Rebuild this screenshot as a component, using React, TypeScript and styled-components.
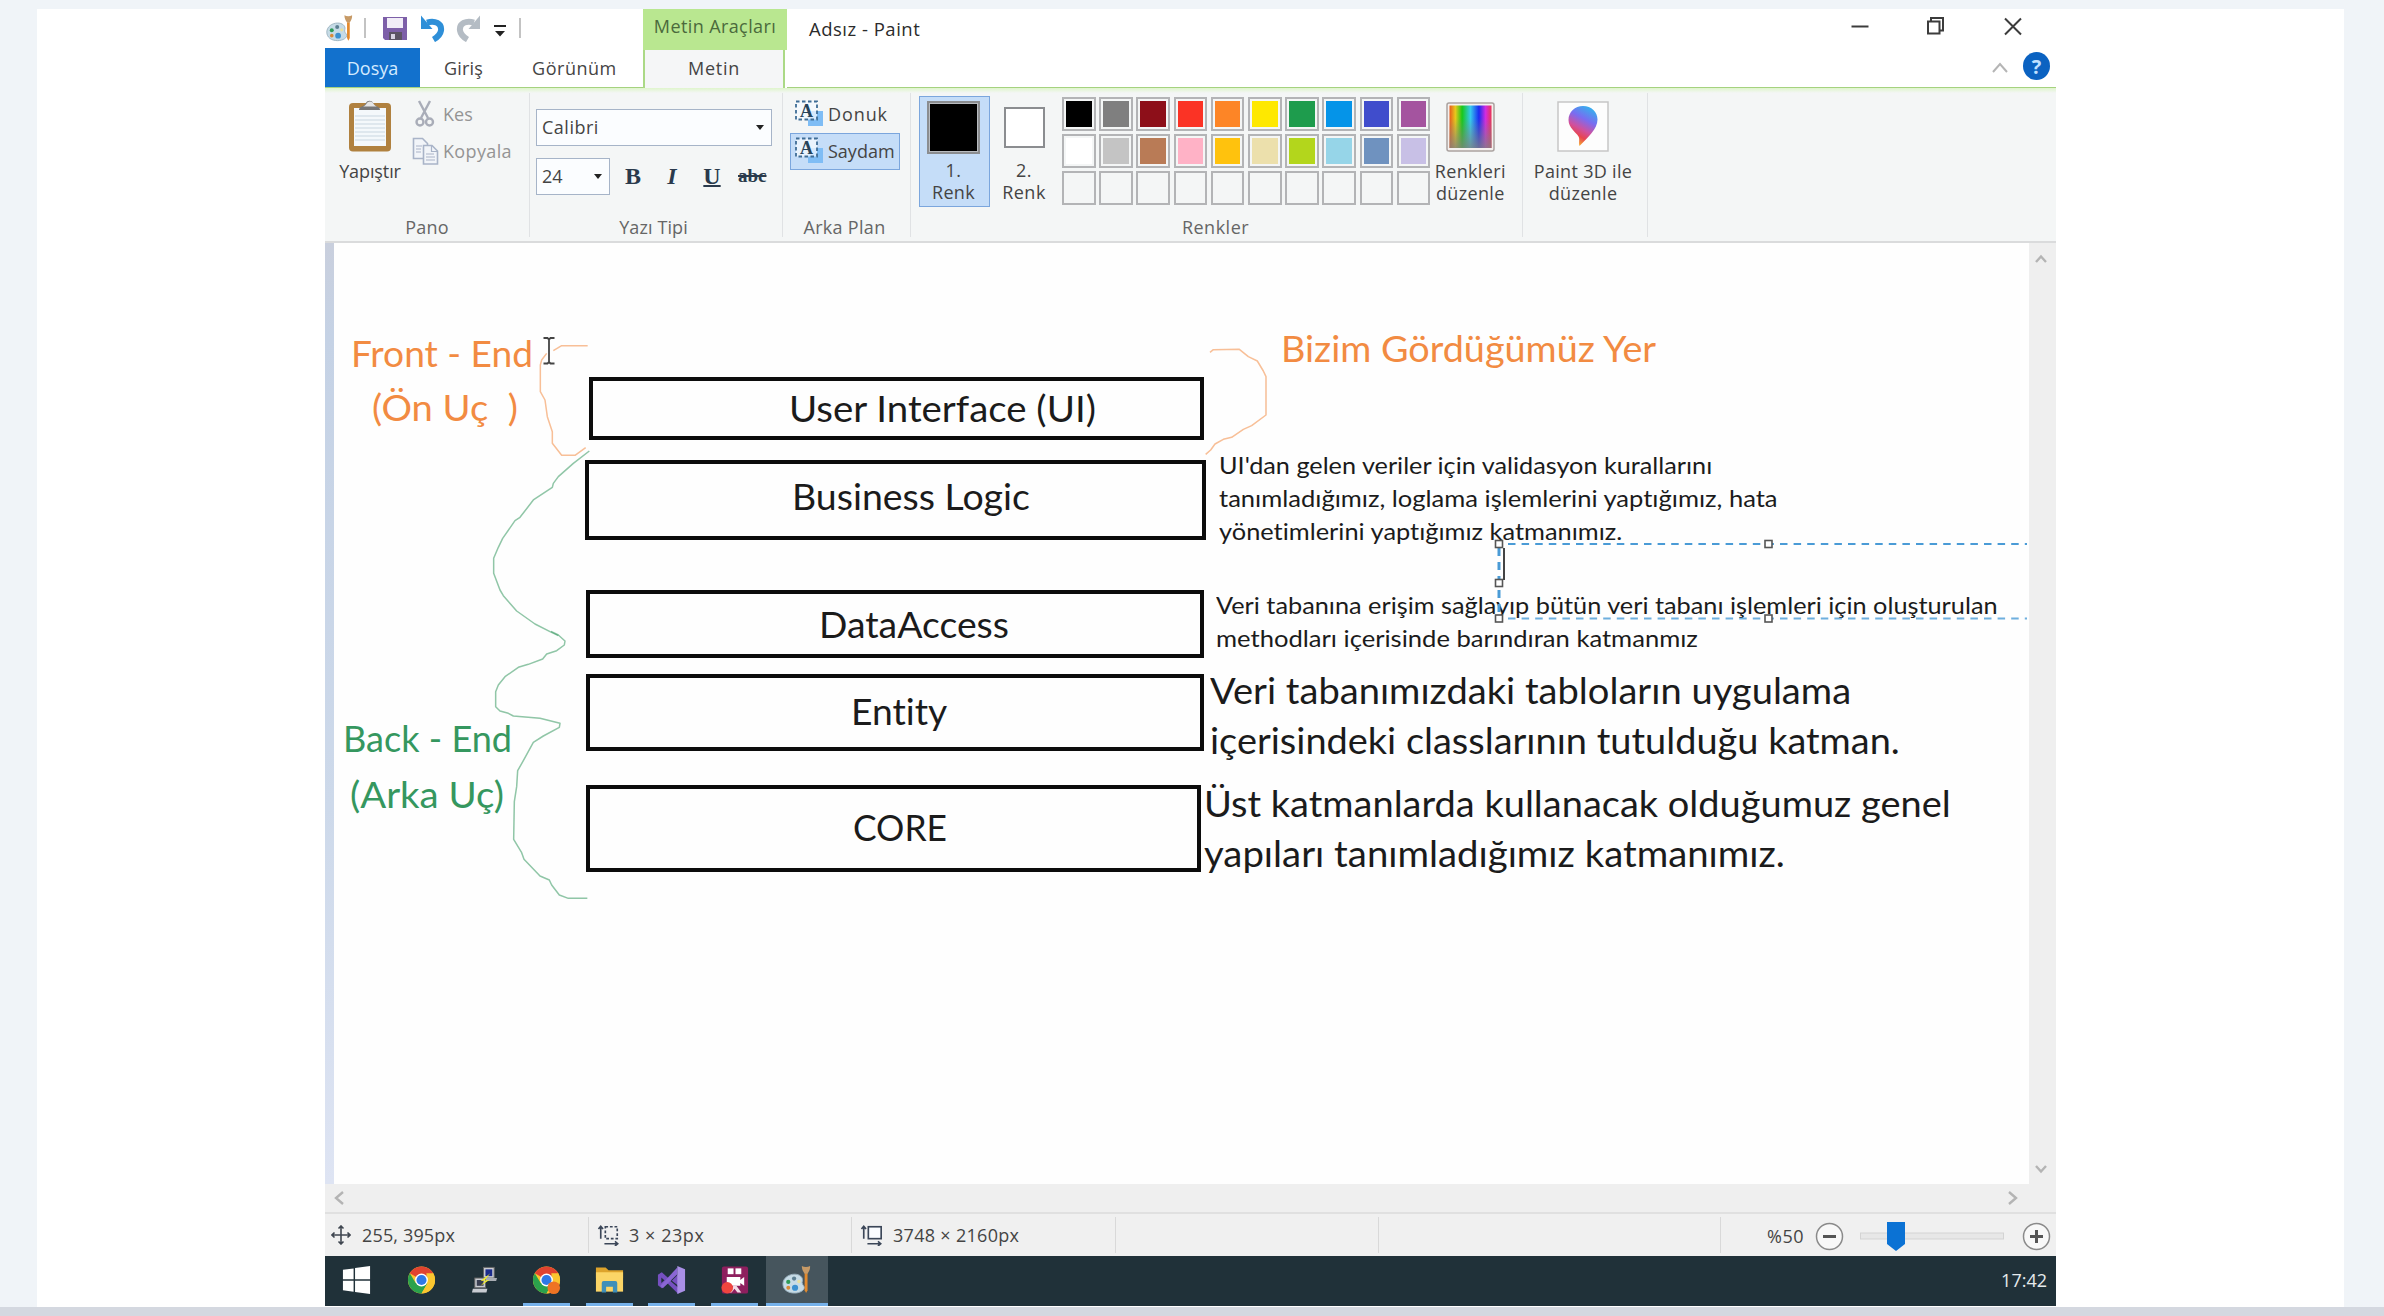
import React from "react";
import styled, { createGlobalStyle } from "styled-components";

const Global = createGlobalStyle`
  * { box-sizing: border-box; }
  body { margin: 0; background: #f0f4f8; }
`;

/* ---------- shell ---------- */

const Page = styled.div`
  display: flex;
  flex-direction: column;
  width: 2384px;
  height: 1316px;
  padding-top: 9px;
  background: #f0f4f8;
  font-family: "Open Sans", "Noto Sans", sans-serif;
  overflow: hidden;
`;
const Card = styled.div`
  display: flex;
  flex: none;
  height: 1298px;
  width: 2307px;
  margin-left: 37px;
  padding-left: 288px;
  background: #fff;
`;
const BottomEdge = styled.div`
  flex: 1;
  background: #d4d8e0;
`;
const Window = styled.div`
  display: flex;
  flex-direction: column;
  width: 1731px;
  height: 1298px;
`;

const Txt = styled.span<{ $size?: number; $track?: number; $color?: string; $lh?: number }>`
  display: block;
  flex: none;
  white-space: pre;
  font-size: ${(p) => p.$size ?? 18}px;
  letter-spacing: ${(p) => p.$track ?? 0.4}px;
  line-height: ${(p) => p.$lh ?? 22}px;
  color: ${(p) => p.$color ?? "#444444"};
`;

/* ---------- title bar ---------- */

const Header = styled.div`
  display: flex;
  height: 79px;
  background: #fff;
`;
const HeaderLeft = styled.div`
  display: flex;
  flex-direction: column;
  width: 318px;
`;
const QuickAccess = styled.div`
  display: flex;
  align-items: center;
  height: 39px;
  padding-bottom: 2px;
`;
const Bar = styled.i<{ $ml: number }>`
  width: 2px;
  height: 20px;
  margin-left: ${(p) => p.$ml}px;
  background: #c3c3c3;
`;
const QuickIcon = styled.svg<{ $w: number; $ml: number }>`
  flex: none;
  width: ${(p) => p.$w}px;
  height: 28px;
  margin-left: ${(p) => p.$ml}px;
`;
const TabRow = styled.div`
  display: flex;
  height: 40px;
  border-bottom: 1px solid #a5d27f;
`;
const FileTab = styled.div`
  display: flex;
  justify-content: center;
  width: 95px;
  height: 39px;
  padding-top: 9px;
  background: #1271cd;
`;
const Tab = styled.div<{ $pl: number }>`
  padding: 9px 0 0 ${(p) => p.$pl}px;
`;
const ContextTab = styled.div`
  display: flex;
  flex-direction: column;
  width: 144px;
  background: #b9e790;
`;
const ContextTitle = styled.div`
  display: flex;
  justify-content: center;
  height: 41px;
  padding-top: 6px;
`;
const ContextBody = styled.div`
  display: flex;
  justify-content: center;
  width: 142px;
  padding-top: 7px;
  border-left: 2px solid #abd986;
  border-right: 2px solid #abd986;
  background: #f5f6f7;
`;
const ContextRest = styled.div`
  display: flex;
  flex: 1;
  background: #fff;
`;
const HeaderRight = styled.div`
  display: flex;
  flex: 1;
  flex-direction: column;
`;
const TitleRow = styled.div`
  display: flex;
  height: 39px;
  padding-left: 22px;
`;
const Controls = styled.svg`
  width: 240px;
  height: 39px;
  margin-left: auto;
`;
const HelpRow = styled.div`
  display: flex;
  align-items: center;
  justify-content: flex-end;
  height: 40px;
  border-bottom: 1px solid #a5d27f;
`;
const Collapse = styled.svg`
  width: 18px;
  height: 14px;
  margin-right: 14px;
`;
const Help = styled.div`
  display: flex;
  align-items: center;
  justify-content: center;
  width: 27px;
  height: 28px;
  margin: 0 6px 3px 0;
  border-radius: 50%;
  background: #0b62c1;
  color: #bfe0ff;
  font-size: 20px;
  font-weight: 700;
`;

/* ---------- ribbon ---------- */

const Ribbon = styled.div`
  display: flex;
  height: 155px;
  border-bottom: 2px solid #dadbdc;
  background: linear-gradient(#dff5cc 0, #f4f6f6 5px);
`;
const Group = styled.div<{ $w: number }>`
  display: flex;
  flex-direction: column;
  flex: none;
  width: ${(p) => p.$w}px;
  margin: 5px 0 4px;
  border-right: 1px solid #e0e2e4;
`;
const GroupBody = styled.div<{ $pl?: number }>`
  display: flex;
  flex: 1;
  padding-left: ${(p) => p.$pl ?? 0}px;
`;
const GroupLabel = styled.div<{ $inset?: number }>`
  display: flex;
  justify-content: center;
  height: 20px;
  padding-right: ${(p) => p.$inset ?? 0}px;
`;
const BigButton = styled.div<{ $w: number; $pt: number; $gap: number; $ml?: number }>`
  display: flex;
  flex-direction: column;
  flex: none;
  align-items: center;
  width: ${(p) => p.$w}px;
  margin-left: ${(p) => p.$ml ?? 0}px;
  padding-top: ${(p) => p.$pt}px;
  gap: ${(p) => p.$gap}px;
`;
const BigLabel = styled.div`
  display: flex;
  flex-direction: column;
  align-items: center;
`;
const Stack = styled.div<{ $pt: number }>`
  display: flex;
  flex-direction: column;
  padding-top: ${(p) => p.$pt}px;
`;
const SmallButton = styled.div<{ $on?: boolean; $w?: number }>`
  display: flex;
  align-items: center;
  gap: 4px;
  width: ${(p) => (p.$w ? p.$w + "px" : "auto")};
  height: 37px;
  padding: 0 0 2px 3px;
  border: 1px solid ${(p) => (p.$on ? "#7ba6dd" : "transparent")};
  background: ${(p) => (p.$on ? "#c5ddf8" : "transparent")};
`;
const Select = styled.div<{ $w: number }>`
  display: flex;
  align-items: center;
  justify-content: space-between;
  width: ${(p) => p.$w}px;
  height: 37px;
  padding: 0 7px 0 5px;
  border: 1px solid #a6b4c8;
  background: #fbfdff;
`;
const Arrow = styled.i`
  border: 4.5px solid transparent;
  border-top: 5px solid #222;
  border-bottom: 0;
`;
const FontRow = styled.div`
  display: flex;
  align-items: center;
  margin-top: 12px;
`;
const Glyph = styled.span<{ $w: number; $ml: number; $size?: number; $italic?: boolean; $line?: string }>`
  width: ${(p) => p.$w}px;
  margin-left: ${(p) => p.$ml}px;
  font-family: "Liberation Serif", "DejaVu Serif", serif;
  font-size: ${(p) => p.$size ?? 24}px;
  font-weight: 700;
  font-style: ${(p) => (p.$italic ? "italic" : "normal")};
  text-decoration: ${(p) => p.$line ?? "none"};
  text-decoration-thickness: 2px;
  text-align: center;
  white-space: nowrap;
  line-height: 30px;
  color: #2a3a4c;
`;
const ColorSlot = styled.div<{ $on?: boolean; $w: number; $ml: number; $pt: number }>`
  display: flex;
  flex-direction: column;
  align-items: center;
  width: ${(p) => p.$w}px;
  height: 111px;
  margin: 3px 0 0 ${(p) => p.$ml}px;
  padding: ${(p) => p.$pt}px 2px 0 0;
  border: 1px solid ${(p) => (p.$on ? "#7ba6dd" : "transparent")};
  background: ${(p) => (p.$on ? "#c5ddf8" : "transparent")};
`;
const Swatch = styled.i<{ $size: number; $c: string; $ring: string; $mb: number }>`
  width: ${(p) => p.$size}px;
  height: ${(p) => p.$size}px;
  margin-bottom: ${(p) => p.$mb}px;
  border: 2px solid #8b8d90;
  background: ${(p) => p.$c};
  box-shadow: inset 0 0 0 1px ${(p) => p.$ring};
`;
const Palette = styled.div`
  display: grid;
  grid-template-columns: repeat(10, 33.6px);
  grid-template-rows: repeat(3, 33.6px);
  gap: 3.6px;
  margin: 4px 0 0 3px;
`;
const Cell = styled.i<{ $c?: string }>`
  border: 2px solid #b3b4b6;
  padding: 2px;
  background: ${(p) => p.$c ?? "transparent"};
  background-clip: content-box;
`;

/* ---------- work area ---------- */

const WorkArea = styled.div`
  display: flex;
  height: 941px;
`;
const Gutter = styled.div`
  width: 9px;
  background: linear-gradient(#c9cfdd, #c5d2e5 10%, #cdd9ea 60%, #dee4f3);
`;
const Sheet = styled.div`
  position: relative;
  width: 1695px;
  background: #fefefe;
  overflow: hidden;
`;
const VScroll = styled.div`
  display: flex;
  flex: 1;
  flex-direction: column;
  align-items: center;
  justify-content: space-between;
  padding: 8px 3px 7px 0;
  background: #efefef;
`;
const HScroll = styled.div`
  display: flex;
  align-items: center;
  justify-content: space-between;
  height: 28px;
  padding: 0 35px 0 6px;
  background: #efefef;
`;
const Chevron = styled.svg`
  width: 16px;
  height: 16px;
  fill: none;
  stroke: #b4b4b4;
  stroke-width: 2.4;
`;
const Ink = styled.svg`
  position: absolute;
  inset: 0;
  width: 1695px;
  height: 941px;
  fill: none;
`;
const Box = styled.div<{ $x: number; $y: number; $w: number; $h: number; $pl: number; $lift?: number }>`
  position: absolute;
  left: ${(p) => p.$x}px;
  top: ${(p) => p.$y}px;
  display: flex;
  align-items: center;
  width: ${(p) => p.$w}px;
  height: ${(p) => p.$h}px;
  padding: 0 0 ${(p) => p.$lift ?? 0}px ${(p) => p.$pl}px;
  border: 4px solid #0c0c0c;
`;
const Note = styled.div<{ $x: number; $y: number }>`
  position: absolute;
  left: ${(p) => p.$x}px;
  top: ${(p) => p.$y}px;
`;
const Line = styled.span<{ $stretch: number; $size?: number; $lh?: number; $c?: string; $in?: number }>`
  display: block;
  margin-left: ${(p) => p.$in ?? 0}px;
  font-family: "Lato", "Noto Sans", sans-serif;
  font-size: ${(p) => p.$size ?? 36}px;
  font-variant-ligatures: none;
  line-height: ${(p) => p.$lh ?? 50}px;
  white-space: pre;
  color: ${(p) => p.$c ?? "#1b1b1b"};
  transform: scaleX(${(p) => p.$stretch});
  transform-origin: left;
`;

/* ---------- status bar and taskbar ---------- */

const Status = styled.div`
  display: flex;
  height: 44px;
  padding-top: 3px;
  border-top: 2px solid #e0e0e0;
  background: #f0f0f0;
`;
const Field = styled.div<{ $w: number; $pl: number; $gap?: number }>`
  display: flex;
  align-items: center;
  flex: none;
  gap: ${(p) => p.$gap ?? 0}px;
  width: ${(p) => p.$w}px;
  height: 36px;
  padding-left: ${(p) => p.$pl}px;
  border-right: 1px solid #d9d9d9;
`;
const Zoom = styled.div`
  display: flex;
  align-items: center;
  flex: 1;
  padding: 0 6px 1px 46px;
`;
const Round = styled.svg<{ $ml?: number }>`
  flex: none;
  width: 29px;
  height: 29px;
  margin-left: ${(p) => p.$ml ?? 0}px;
`;
const Slider = styled.svg`
  flex: none;
  width: 145px;
  height: 32px;
  margin: 0 17px 0 16px;
`;
const Taskbar = styled.div`
  display: flex;
  height: 50px;
  background: #203139;
`;
const Task = styled.div<{ $active?: boolean; $start?: boolean }>`
  display: flex;
  flex-direction: column;
  align-items: center;
  width: 62.5px;
  margin-right: ${(p) => (p.$start ? 3 : 0)}px;
  padding-top: 8px;
  background: ${(p) => (p.$active ? "#46555d" : "transparent")};
`;
const TaskIcon = styled.svg`
  width: 31px;
  height: 32px;
`;
const Running = styled.i<{ $full?: boolean }>`
  width: ${(p) => (p.$full ? "100%" : "47px")};
  height: 3px;
  margin-top: auto;
  background: #76b1ea;
`;
const Clock = styled.div`
  margin: 0 9px 0 auto;
  padding-top: 13px;
`;

/* ---------- icons ---------- */

const PaletteArt = () => (
  <>
    <path d="M1 20c0-6 6-10 12-10 5 0 9 3 8 7-1 3 1 4 2 6 1 3-4 6.500-10 6.500C6 29.500 1 26 1 20z" fill="#c6dbe6" stroke="#9bb2bf" strokeWidth="1" />
    <circle cx="6.500" cy="18" r="2.200" fill="#2f9b57" />
    <circle cx="12.500" cy="14.500" r="2.200" fill="#5d7f92" />
    <circle cx="6.500" cy="24" r="2" fill="#d98b38" />
    <circle cx="13.500" cy="24" r="3.200" fill="#3b91d0" />
    <circle cx="17.500" cy="17.500" r="1.800" fill="#e8e0a0" />
    <path d="M23.400 9h3v17.500l-1.500 3-1.500-3z" fill="#e48a2c" />
    <path d="M20.500 1.500c2.500 1.500 6 1.500 8.500 0 .2 3-.8 5.500-2.600 8h-3C21.500 7 20.500 4.500 20.500 1.500z" fill="#c79a66" />
  </>
);
const ChromeArt = () => (
  <>
    <circle cx="16" cy="16" r="14" fill="#fbc62f" />
    <path d="M16 16 3.900 9A14 14 0 0 1 28.100 9z" fill="#e1432f" />
    <path d="M3.900 9A14 14 0 0 0 16 30l6-10.500L10 19z" fill="#2ba24c" />
    <path d="M28.100 9A14 14 0 0 1 16 30l6.100-10.500L21 9z" fill="#fbc62f" />
    <circle cx="16" cy="16" r="6.600" fill="#fff" />
    <circle cx="16" cy="16" r="5.200" fill="#2f78e6" />
  </>
);
const TextBlockIcon = () => (
  <svg width="30" height="28" viewBox="0 0 30 28">
    <rect x="14" y="11" width="15" height="15" fill="#7fbdf5" />
    <rect x="2" y="1.500" width="21" height="18" fill="#f6faff" fillOpacity=".75" stroke="#3f6d96" strokeWidth="1.800" strokeDasharray="3.500 2.500" />
    <text x="12.500" y="17" textAnchor="middle" fontFamily="Liberation Serif, serif" fontSize="18" fontWeight="700" fill="#27435a">A</text>
  </svg>
);

const row1 = ["#000000", "#7f7f7f", "#8d0f19", "#fb3325", "#fd8526", "#fee800", "#1e9c4d", "#0594e8", "#404dcc", "#a4549f"];
const row2 = ["#ffffff", "#c4c4c4", "#b97b56", "#ffb2c6", "#ffc20d", "#ece0ac", "#b3d61c", "#96d5e8", "#6f92bf", "#c8c0e6"];

const ORANGE = "#f28b42";
const GREEN = "#35975f";
const handles: [number, number][] = [[1499, 544], [1499, 583], [1499, 618.5], [1768.5, 544], [1768.5, 618.5]];

export default function App() {
  return (
    <Page>
      <Global />
      <Card>
        <Window>
          <Header>
            <HeaderLeft>
              <QuickAccess>
                <QuickIcon $w={28} $ml={0} viewBox="0 0 29 31"><PaletteArt /></QuickIcon>
                <Bar $ml={11} />
                <QuickIcon $w={26} $ml={16} viewBox="0 0 26 28">
                  <path d="M1 3h24v23H3l-2-2z" fill="#7d5fa8" />
                  <rect x="5" y="4" width="16" height="10" fill="#f1edf7" />
                  <rect x="7" y="18" width="13" height="8" fill="#5c5364" />
                  <rect x="9" y="20" width="4" height="5" fill="#d8d2e2" />
                </QuickIcon>
                <QuickIcon $w={25} $ml={12} viewBox="0 0 25 28">
                  <path d="M7 8.500c8-2.500 15 1 14 8-.6 4-4 7-7.500 9" fill="none" stroke="#2e8fd8" strokeWidth="6" />
                  <path d="M1 1.500v13.500h11.500z" fill="#2e8fd8" />
                </QuickIcon>
                <QuickIcon $w={25} $ml={11} viewBox="0 0 25 28">
                  <path d="M18 8.500C10 6 3 9.500 4 16.500c.6 4 4 7 7.500 9" fill="none" stroke="#b4bcc4" strokeWidth="6" />
                  <path d="M24 1.500v13.500H12.500z" fill="#b4bcc4" />
                </QuickIcon>
                <QuickIcon $w={14} $ml={12} viewBox="0 0 14 28">
                  <path d="M1 11h12v2H1zM2 17h10l-5 5.500z" fill="#222" />
                </QuickIcon>
                <Bar $ml={12} />
              </QuickAccess>
              <TabRow>
                <FileTab><Txt $track={0} $color="#d3ebff">Dosya</Txt></FileTab>
                <Tab $pl={24}><Txt $track={0.2}>Giriş</Txt></Tab>
                <Tab $pl={49}><Txt $track={0.5}>Görünüm</Txt></Tab>
              </TabRow>
            </HeaderLeft>
            <ContextTab>
              <ContextTitle><Txt $track={0.4} $color="#4b6a3c">Metin Araçları</Txt></ContextTitle>
              <ContextRest>
                <ContextBody><Txt $track={0.7}>Metin</Txt></ContextBody>
              </ContextRest>
            </ContextTab>
            <HeaderRight>
              <TitleRow>
                <Txt $size={18.5} $track={0.5} $lh={39} $color="#2b2b2b">Adsız - Paint</Txt>
                <Controls viewBox="1816 9 240 39" fill="none" stroke="#3c3c3c" strokeWidth="2">
                  <path d="M1851.500 26.500h17" />
                  <path d="M1928 21.500h11.500v12H1928z" />
                  <path d="M1931 21v-3h12v12.500h-3" />
                  <path d="M2005 18.500l16 16M2021 18.500l-16 16" />
                </Controls>
              </TitleRow>
              <HelpRow>
                <Collapse viewBox="0 0 18 14" fill="none" stroke="#b5b5b5" strokeWidth="2"><path d="M2 11 9 3l7 8" /></Collapse>
                <Help>?</Help>
              </HelpRow>
            </HeaderRight>
          </Header>

          <Ribbon>
            <Group $w={205}>
              <GroupBody $pl={7}>
                <BigButton $w={76} $pt={7} $gap={8}>
                  <svg width="44" height="52" viewBox="0 0 44 52">
                    <rect x="1" y="3" width="42" height="48.500" rx="4" fill="#b0813f" />
                    <path d="M6 8h32v38H6z" fill="#f4f8fb" />
                    <path d="M7 16h30M7 20h30M7 24h30M7 28h30M7 32h30M7 36h30M7 40h30" stroke="#c9d6e0" strokeWidth="1" />
                    <path d="M11 10c0-4 5-3 7-7 1-3 6-3 7 0 2 4 7 3 7 7z" fill="#777" />
                    <path d="M15 6.500c4-1 3-5 7-5s3 4 7 5z" fill="#e6e6e6" />
                  </svg>
                  <Txt $track={-0.1}>Yapıştır</Txt>
                </BigButton>
                <Stack $pt={3}>
                  <SmallButton>
                    <svg width="27" height="28" viewBox="0 0 27 28" fill="none" stroke="#a9adb8" strokeWidth="2.400">
                      <path d="M7 1l9 17M18 1 9 18" />
                      <circle cx="8" cy="22" r="3.500" />
                      <circle cx="17.500" cy="22" r="3.500" />
                    </svg>
                    <Txt $track={0} $color="#949494">Kes</Txt>
                  </SmallButton>
                  <SmallButton>
                    <svg width="27" height="28" viewBox="0 0 27 28" fill="#f2f5f9" stroke="#a9b4c8" strokeWidth="1.600">
                      <path d="M1.500 1.500h9l5 5v15h-14z" />
                      <path d="M11.500 8.500h8.500l5.500 5.500v13h-14z" />
                      <path d="M19.500 8.500v6h6M14 17h8M14 20h9M14 23h9M4 9h6M4 12h5M4 15h5" fill="none" strokeWidth="1.200" />
                    </svg>
                    <Txt $track={0.35} $color="#949494">Kopyala</Txt>
                  </SmallButton>
                </Stack>
              </GroupBody>
              <GroupLabel><Txt $track={0.2} $lh={20} $color="#666">Pano</Txt></GroupLabel>
            </Group>

            <Group $w={253}>
              <GroupBody $pl={6}>
                <Stack $pt={15.5}>
                  <Select $w={236}><Txt $track={0.5}>Calibri</Txt><Arrow /></Select>
                  <FontRow>
                    <Select $w={74}><Txt $track={0}>24</Txt><Arrow /></Select>
                    <Glyph $w={20} $ml={13}>B</Glyph>
                    <Glyph $w={18} $ml={20} $italic>I</Glyph>
                    <Glyph $w={18} $ml={22} $line="underline">U</Glyph>
                    <Glyph $w={28} $ml={17} $size={19} $line="line-through">abc</Glyph>
                  </FontRow>
                </Stack>
              </GroupBody>
              <GroupLabel $inset={5}><Txt $track={0.1} $lh={20} $color="#666">Yazı Tipi</Txt></GroupLabel>
            </Group>

            <Group $w={128}>
              <GroupBody $pl={7}>
                <Stack $pt={3}>
                  <SmallButton $w={110}><TextBlockIcon /><Txt $track={0.9}>Donuk</Txt></SmallButton>
                  <SmallButton $on $w={110}><TextBlockIcon /><Txt $track={0}>Saydam</Txt></SmallButton>
                </Stack>
              </GroupBody>
              <GroupLabel $inset={4}><Txt $track={0.3} $lh={20} $color="#666">Arka Plan</Txt></GroupLabel>
            </Group>

            <Group $w={612}>
              <GroupBody $pl={8}>
                <ColorSlot $on $w={71} $ml={0} $pt={4}>
                  <Swatch $size={53} $c="#000000" $ring="#b9bcc0" $mb={5} />
                  <Txt>1.</Txt>
                  <Txt $track={0.3}>Renk</Txt>
                </ColorSlot>
                <ColorSlot $w={68} $ml={1} $pt={10}>
                  <Swatch $size={41} $c="#ffffff" $ring="#ffffff" $mb={11} />
                  <Txt>2.</Txt>
                  <Txt $track={0.5}>Renk</Txt>
                </ColorSlot>
                <Palette>
                  {row1.map((c) => <Cell key={c} $c={c} />)}
                  {row2.map((c) => <Cell key={c} $c={c} />)}
                  {row1.map((c) => <Cell key={"empty" + c} />)}
                </Palette>
                <BigButton $w={84} $ml={-2} $pt={9} $gap={8}>
                  <svg width="49" height="50" viewBox="0 0 49 50">
                    <defs>
                      <linearGradient id="hue">
                        <stop offset="0" stopColor="#e85a1c" /><stop offset=".14" stopColor="#e8c81c" />
                        <stop offset=".3" stopColor="#18c818" /><stop offset=".5" stopColor="#35c9ee" />
                        <stop offset=".7" stopColor="#1a2cf0" /><stop offset=".86" stopColor="#d32ce0" />
                        <stop offset="1" stopColor="#ea3452" />
                      </linearGradient>
                      <linearGradient id="fade" x2="0" y2="1">
                        <stop offset=".3" stopColor="#808080" stopOpacity="0" /><stop offset="1" stopColor="#808080" stopOpacity=".8" />
                      </linearGradient>
                    </defs>
                    <rect x="1" y="1" width="47" height="48" rx="2" fill="#f4f0ee" stroke="#aaa2a0" strokeWidth="1.500" />
                    <rect x="3.500" y="3.500" width="42" height="42.500" fill="url(#hue)" />
                    <rect x="3.500" y="3.500" width="42" height="42.500" fill="url(#fade)" />
                  </svg>
                  <BigLabel><Txt $track={0.35}>Renkleri</Txt><Txt $track={0.35}>düzenle</Txt></BigLabel>
                </BigButton>
              </GroupBody>
              <GroupLabel $inset={2}><Txt $track={0.5} $lh={20} $color="#666">Renkler</Txt></GroupLabel>
            </Group>

            <Group $w={125}>
              <GroupBody>
                <BigButton $w={120} $pt={8} $gap={8}>
                  <svg width="52" height="51" viewBox="0 0 52 51">
                    <defs>
                      <linearGradient id="pin" x1=".75" y1="0" x2=".35" y2="1">
                        <stop offset="0" stopColor="#2fb6ee" /><stop offset=".35" stopColor="#7a6cf0" />
                        <stop offset=".6" stopColor="#d0509e" /><stop offset=".78" stopColor="#e8454f" />
                        <stop offset="1" stopColor="#f7b62c" />
                      </linearGradient>
                    </defs>
                    <rect x="1" y="1" width="50" height="49" fill="#fdfdfd" stroke="#c6c6c6" strokeWidth="1.500" />
                    <path d="M26 5c8.500 0 14.500 6 14.500 13.500C40.500 28 31 36 22.500 45c-1-3 .5-7-1-9.500C19 31 11.500 27 11.500 19 11.500 11 18 5 26 5z" fill="url(#pin)" />
                  </svg>
                  <BigLabel><Txt $track={0.3}>Paint 3D ile</Txt><Txt $track={0.35}>düzenle</Txt></BigLabel>
                </BigButton>
              </GroupBody>
            </Group>
          </Ribbon>

          <WorkArea>
            <Gutter />
            <Sheet>
              <Ink viewBox="334 243 1695 941">
                <g stroke={ORANGE} strokeOpacity=".55" strokeWidth="4.500" strokeLinejoin="round">
                  <path transform="translate(320 310) scale(.33333)" d="M803 107H725L700 122M680 130 665 150 661 165V245L675 270 682 320 697 365V400L725 436H765L797 413" />
                  <path transform="translate(1180 310) scale(.33333)" d="M90 127 100 119 178 118 205 140 232 153 250 183 258 200V315L215 347 190 358 155 382 130 388 105 402 92 420 77 433" />
                </g>
                <g stroke={GREEN} strokeOpacity=".55" strokeWidth="4.500" strokeLinejoin="round">
                  <path transform="translate(320 310) scale(.33333)" d="M808 423 760 460 715 500 700 520 697 532 640 570 600 622 585 632 548 685 535 712 521 745V790L540 840 550 857 590 903 645 942 690 965 715 977" />
                  <path transform="translate(320 630) scale(.33333)" d="M693 4 715 15 735 33 733 45 710 62 680 72 668 87 625 103 595 112 555 140 535 165 527 185V230L540 243 565 250 580 258 660 265 720 280 718 292 670 318 640 337 610 392 593 422 590 470 583 515 581 628 605 668 612 688 660 738 688 750 695 765 718 795 745 805H802" />
                </g>
              </Ink>

              <Note $x={16.5} $y={83}>
                <Line $c={ORANGE} $stretch={1.03} $lh={54}>Front - End</Line>
                <Line $c={ORANGE} $stretch={1.06} $lh={54} $in={21}>(Ön Uç  )</Line>
              </Note>
              <Note $x={8.5} $y={466.5}>
                <Line $c={GREEN} $stretch={1.002} $lh={56}>Back - End</Line>
                <Line $c={GREEN} $stretch={1.066} $lh={56} $in={7}>(Arka Uç)</Line>
              </Note>
              <Note $x={947} $y={80}><Line $c={ORANGE} $stretch={1.049}>Bizim Gördüğümüz Yer</Line></Note>

              <Box $x={255.3} $y={134.3} $w={615} $h={63} $pl={196} $lift={2}><Line $stretch={1.067}>User Interface (UI)</Line></Box>
              <Box $x={250.5} $y={217} $w={621.5} $h={80} $pl={203} $lift={8}><Line $stretch={1.04}>Business Logic</Line></Box>
              <Box $x={252} $y={347} $w={618} $h={68} $pl={229}><Line $stretch={1.037}>DataAccess</Line></Box>
              <Box $x={252} $y={431} $w={617.5} $h={77} $pl={260.5} $lift={4}><Line $stretch={1.034}>Entity</Line></Box>
              <Box $x={252} $y={542} $w={614.5} $h={87} $pl={262.5} $lift={4}><Line $stretch={0.982}>CORE</Line></Box>

              <Note $x={884.5} $y={205}>
                <Line $size={24} $lh={33} $stretch={1.052}>UI'dan gelen veriler için validasyon kurallarını</Line>
                <Line $size={24} $lh={33} $stretch={1.064}>tanımladığımız, loglama işlemlerini yaptığımız, hata</Line>
                <Line $size={24} $lh={33} $stretch={1.058}>yönetimlerini yaptığımız katmanımız.</Line>
              </Note>
              <Note $x={882} $y={345}>
                <Line $size={24} $lh={33.4} $stretch={1.054}>Veri tabanına erişim sağlayıp bütün veri tabanı işlemleri için oluşturulan</Line>
                <Line $size={24} $lh={33.4} $stretch={1.066}>methodları içerisinde barındıran katmanmız</Line>
              </Note>
              <Note $x={876} $y={422}>
                <Line $stretch={1.058}>Veri tabanımızdaki tabloların uygulama</Line>
                <Line $stretch={1.054}>içerisindeki classlarının tutulduğu katman.</Line>
              </Note>
              <Note $x={870} $y={535}>
                <Line $stretch={1.055}>Üst katmanlarda kullanacak olduğumuz genel</Line>
                <Line $stretch={1.064}>yapıları tanımladığımız katmanımız.</Line>
              </Note>

              <Ink viewBox="334 243 1695 941">
                <g stroke="#4a9bd6" strokeWidth="2.200" strokeDasharray="7.500 6.100">
                  <path d="M1508 544H2027" />
                  <path d="M1508 618.500H2027" strokeOpacity=".8" />
                  <path d="M1499 548V615" strokeDasharray="8 6" strokeWidth="3" />
                </g>
                <path d="M1504 548V580" stroke="#444" strokeWidth="2" />
                <path d="M543.500 338h4l1.500 1.500 1.500-1.500h4M549 339v23M543.500 363.500h4l1.500-1.500 1.500 1.500h4" stroke="#444" strokeWidth="1.800" />
                {handles.map(([x, y]) => (
                  <rect key={`${x}-${y}`} x={x - 3.5} y={y - 3.5} width="7" height="7" fill="#fff" stroke="#555" strokeWidth="1.600" />
                ))}
              </Ink>
            </Sheet>
            <VScroll>
              <Chevron viewBox="0 0 16 16"><path d="M3 11 8 5.500 13 11" /></Chevron>
              <Chevron viewBox="0 0 16 16"><path d="M3 5 8 10.500 13 5" /></Chevron>
            </VScroll>
          </WorkArea>
          <HScroll>
            <Chevron viewBox="0 0 16 16"><path d="M12 2 5 8l7 6" /></Chevron>
            <Chevron viewBox="0 0 16 16"><path d="M4 2l7 6-7 6" /></Chevron>
          </HScroll>

          <Status>
            <Field $w={264} $pl={6} $gap={11}>
              <svg width="20" height="20" viewBox="0 0 20 20" fill="none" stroke="#3f4650" strokeWidth="1.600">
                <path d="M10 1v18M1 10h18M7.500 3.500 10 1l2.500 2.500M7.500 16.500 10 19l2.500-2.500M3.500 7.500 1 10l2.500 2.500M16.500 7.500 19 10l-2.500 2.500" />
              </svg>
              <Txt $track={0.15}>255, 395px</Txt>
            </Field>
            <Field $w={263} $pl={8} $gap={8}>
              <svg width="24" height="22" viewBox="0 0 24 24" fill="none" stroke="#3b4658" strokeWidth="1.800">
                <path d="M3 16V3M.5 5.500 3 2.500l2.500 3M7 21.500h14M18.500 19l3 2.500-3 2.500" />
                <rect x="8" y="3" width="13" height="13" strokeDasharray="3 2" />
              </svg>
              <Txt $track={0.55}>3 × 23px</Txt>
            </Field>
            <Field $w={264} $pl={8} $gap={9}>
              <svg width="24" height="22" viewBox="0 0 24 24" fill="none" stroke="#3b4658" strokeWidth="1.800">
                <path d="M3 16V3M.5 5.500 3 2.500l2.500 3M7 21.500h14M18.500 19l3 2.500-3 2.500" />
                <rect x="8" y="3" width="14" height="13" fill="#fafcff" />
              </svg>
              <Txt $track={0.3}>3748 × 2160px</Txt>
            </Field>
            <Field $w={263} $pl={0} />
            <Field $w={342} $pl={0} />
            <Zoom>
              <Txt $track={0.6}>%50</Txt>
              <Round viewBox="0 0 29 29" $ml={11}>
                <circle cx="14.500" cy="14.500" r="13" fill="#f8f8f8" stroke="#8a8a8a" strokeWidth="1.500" />
                <path d="M8 14.500h13" stroke="#555" strokeWidth="3" />
              </Round>
              <Slider viewBox="0 0 145 32">
                <rect x=".5" y="13" width="143" height="6" fill="#e7e7e7" stroke="#d3d3d3" />
                <path d="M27 2h18v22l-9 7-9-7z" fill="#0b72d4" />
              </Slider>
              <Round viewBox="0 0 29 29">
                <circle cx="14.500" cy="14.500" r="13" fill="#f8f8f8" stroke="#8a8a8a" strokeWidth="1.500" />
                <path d="M8 14.500h13M14.500 8v13" stroke="#555" strokeWidth="3" />
              </Round>
            </Zoom>
          </Status>

          <Taskbar>
            <Task $start>
              <TaskIcon viewBox="0 0 32 32">
                <path d="M2 5.500 13 4v11.300H2zM14.500 3.700 30 1.500v13.800H14.500zM2 16.800h11V28L2 26.500zM14.500 16.800H30V30.500l-15.500-2.200z" fill="#fff" />
              </TaskIcon>
            </Task>
            <Task><TaskIcon viewBox="0 0 32 32"><ChromeArt /></TaskIcon></Task>
            <Task>
              <TaskIcon viewBox="0 0 32 32">
                <rect x="15" y="3" width="11" height="11" fill="#c9ccd2" stroke="#666" />
                <rect x="17" y="5" width="7" height="7" fill="#1c2c8c" />
                <path d="M16 14h13l-1 3H16z" fill="#a9adb3" />
                <rect x="6" y="14" width="11" height="10" fill="#c9ccd2" stroke="#666" />
                <rect x="8" y="16" width="7" height="6" fill="#3a3f52" />
                <path d="M4 25h15l-1 4H3z" fill="#c9ccd2" />
                <path d="M22 9l-10 8 5-.500-5 5.500 9-6-5 .500z" fill="#f4ee2a" />
              </TaskIcon>
            </Task>
            <Task>
              <TaskIcon viewBox="0 0 32 32"><ChromeArt /><circle cx="23.500" cy="24" r="6.500" fill="#ee7424" /></TaskIcon>
              <Running />
            </Task>
            <Task>
              <TaskIcon viewBox="0 0 32 32">
                <path d="M2 3h10l3 3h15v8H2z" fill="#dda32b" />
                <rect x="2" y="8" width="28" height="20" fill="#fbd566" />
                <path d="M8 29V19q0-2 2-2h12q2 0 2 2v10h-4.500v-6h-7v6z" fill="#3f8fb8" />
              </TaskIcon>
              <Running />
            </Task>
            <Task>
              <TaskIcon viewBox="0 0 32 32">
                <path fillRule="evenodd" d="M2 10.500 6 8l10 9 7-7v12l-7-5.500L6 24.500l-4-3zM5.500 13.500v5.500L9 16z" fill="#7650c0" />
                <path d="M5 8.500 23 24v6.500L4.500 12z" fill="#7650c0" />
                <path d="M4.500 22 22 3v7L7 24.500z" fill="#8a66d4" />
                <path d="M22 1.500 30 5v22l-8 3.500z" fill="#a98fe6" />
              </TaskIcon>
              <Running />
            </Task>
            <Task>
              <TaskIcon viewBox="0 0 32 32">
                <rect x="3" y="2" width="27" height="28" rx="2" fill="#8e1f5e" />
                <rect x="9" y="4" width="6" height="6" fill="#fff" />
                <rect x="17" y="4" width="6" height="6" fill="#fff" />
                <path d="M8 13h14v3l4-3v9l-4-3v3H8z" fill="#fff" />
                <path d="M15 22h3l5 7h-4l-3-4-3 4h-3z" fill="#f2dbe6" />
                <circle cx="8.500" cy="24" r="6" fill="#f0453e" />
              </TaskIcon>
              <Running />
            </Task>
            <Task $active>
              <TaskIcon viewBox="-1 0 32 32"><PaletteArt /></TaskIcon>
              <Running $full />
            </Task>
            <Clock><Txt $track={0} $color="#e6eaec">17:42</Txt></Clock>
          </Taskbar>
        </Window>
      </Card>
      <BottomEdge />
    </Page>
  );
}
